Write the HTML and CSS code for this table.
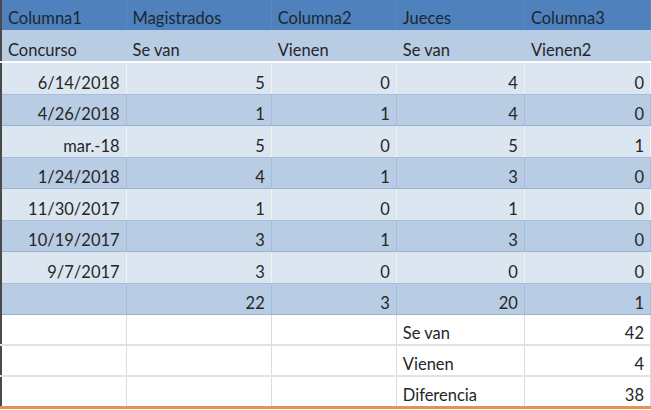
FILE: index.html
```html
<!DOCTYPE html>
<html>
<head>
<meta charset="utf-8">
<link rel="stylesheet" href="styles.css">
</head>
<body>
<table class="sheet">
  <colgroup>
    <col class="c1"><col class="c2"><col class="c3"><col class="c4"><col class="c5">
  </colgroup>
  <tr class="head">
    <td>Columna1</td><td>Magistrados</td><td>Columna2</td><td>Jueces</td><td>Columna3</td>
  </tr>
  <tr class="sub">
    <td>Concurso</td><td>Se van</td><td>Vienen</td><td>Se van</td><td>Vienen2</td>
  </tr>
  <tr class="light r32">
    <td class="num">6/14/2018</td><td class="num">5</td><td class="num">0</td><td class="num">4</td><td class="num">0</td>
  </tr>
  <tr class="mid r31">
    <td class="num">4/26/2018</td><td class="num">1</td><td class="num">1</td><td class="num">4</td><td class="num">0</td>
  </tr>
  <tr class="light r32">
    <td class="num">mar.-18</td><td class="num">5</td><td class="num">0</td><td class="num">5</td><td class="num">1</td>
  </tr>
  <tr class="mid r31">
    <td class="num">1/24/2018</td><td class="num">4</td><td class="num">1</td><td class="num">3</td><td class="num">0</td>
  </tr>
  <tr class="light r32">
    <td class="num">11/30/2017</td><td class="num">1</td><td class="num">0</td><td class="num">1</td><td class="num">0</td>
  </tr>
  <tr class="mid r31">
    <td class="num">10/19/2017</td><td class="num">3</td><td class="num">1</td><td class="num">3</td><td class="num">0</td>
  </tr>
  <tr class="light r32">
    <td class="num">9/7/2017</td><td class="num">3</td><td class="num">0</td><td class="num">0</td><td class="num">0</td>
  </tr>
  <tr class="mid r31">
    <td class="num"></td><td class="num">22</td><td class="num">3</td><td class="num">20</td><td class="num">1</td>
  </tr>
  <tr class="plain">
    <td></td><td></td><td></td><td>Se van</td><td class="num">42</td>
  </tr>
  <tr class="plain">
    <td></td><td></td><td></td><td>Vienen</td><td class="num">4</td>
  </tr>
  <tr class="plain last">
    <td></td><td></td><td></td><td>Diferencia</td><td class="num">38</td>
  </tr>
</table>
</body>
</html>
```

FILE: styles.css
```css
html, body {
  margin: 0;
  padding: 0;
  background: #ffffff;
}

.sheet {
  border-collapse: collapse;
  table-layout: fixed;
  width: 651px;
  font-family: Lato, "Liberation Sans", sans-serif;
  font-size: 16.5px;
  line-height: 18px;
  color: #262626;
  border-left: 2px solid #4a4a4a;
}

.c1 { width: 125px; }
.c2 { width: 145px; }
.c3 { width: 125px; }
.c4 { width: 128px; }
.c5 { width: 126px; }

.sheet td {
  padding: 0 6px 2px 6px;
  vertical-align: bottom;
  white-space: nowrap;
  overflow: hidden;
  border: 1px solid #c9d6e6;
  border-top: none;
}

.sheet td.num {
  text-align: right;
}

.head td {
  height: 27px;
  background: #4f81bd;
  color: #1c2733;
  border-right-color: #5a8ac3;
  border-bottom: 1px solid #4f81bd;
}

.sub td {
  height: 29px;
  background: #b8cce4;
  border-right-color: #b8cce4;
  border-bottom: 2px solid #ffffff;
}

.r32 td { height: 29px; }
.r31 td { height: 28px; }

.light td {
  background: #dce6f1;
  border-right-color: #f0f4f9;
  border-bottom: 1px solid #a9bfd9;
}

.mid td {
  background: #b8cce4;
  border-right-color: #a6bcd7;
  border-bottom: 1px solid #9cb3cf;
}

.plain td {
  height: 27px;
  background: #ffffff;
  border-right-color: #dcdcdc;
  border-bottom: 2px solid #e2e2e2;
}

.plain.last td {
  height: 27px;
  border-bottom: 3px solid #e8914f;
}
```
